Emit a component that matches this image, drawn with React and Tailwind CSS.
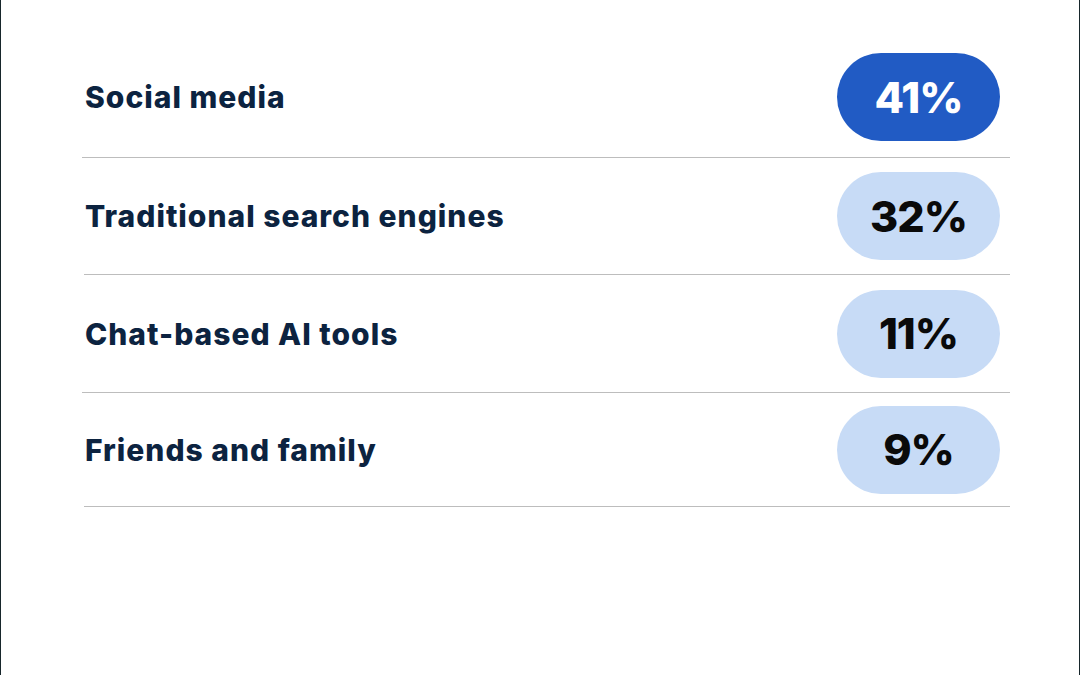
const rows = [
  { label: 'Social media', value: '41%', active: true, h: 'h-[121px]', inset: 'ml-0' },
  { label: 'Traditional search engines', value: '32%', active: false, h: 'h-[117px]', inset: 'ml-[2px]' },
  { label: 'Chat-based AI tools', value: '11%', active: false, h: 'h-[118px]', inset: 'ml-0' },
  { label: 'Friends and family', value: '9%', active: false, h: 'h-[114px]', inset: 'ml-[2px]' },
];

export default function App() {
  return (
    <div
      className="w-[1080px] h-[675px] bg-white border-x border-[#17262b] pt-[37px] pl-[81px] pr-[69px]"
      style={{ fontFamily: 'Inter, "Liberation Sans", sans-serif' }}
    >
      {rows.map((row) => (
        <div
          key={row.label}
          className={`${row.h} ${row.inset} flex items-center justify-between border-b border-[#bdbdbd]`}
        >
          <span className={`${row.inset === 'ml-0' ? 'pl-[3px]' : 'pl-[1px]'} pt-[1px] text-[30px] font-extrabold tracking-[1px] text-[#0c2340]`}>
            {row.label}
          </span>
          <div
            className={`mr-[10px] w-[163px] h-[88px] rounded-full flex items-center justify-center text-[43px] font-extrabold tracking-[-1px] ${
              row.active ? 'bg-[#215bc4] text-white' : 'bg-[#c7dbf6] text-[#0a0a0a]'
            }`}
          >
            {row.value}
          </div>
        </div>
      ))}
    </div>
  );
}
